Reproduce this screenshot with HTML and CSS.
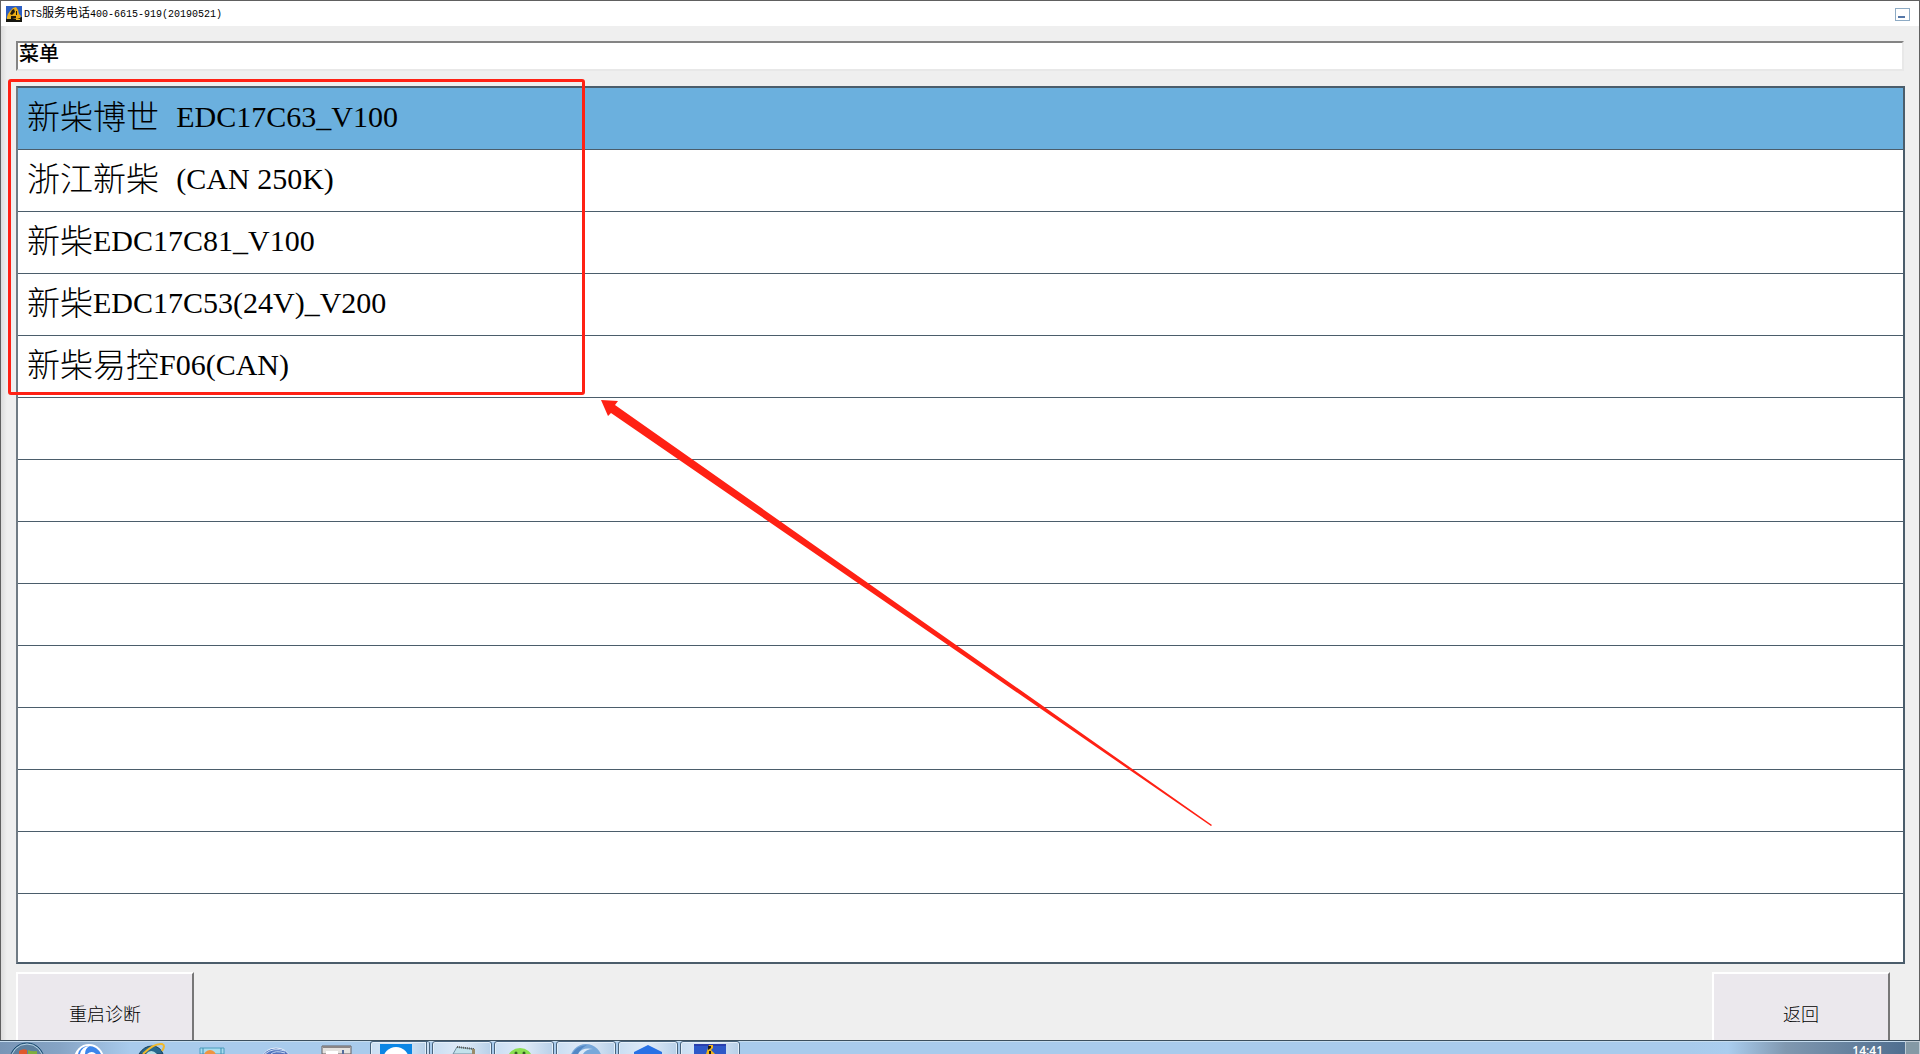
FILE: index.html
```
<!doctype html>
<html lang="zh-CN">

<head>
    <title>DTS</title>
    <meta charset="utf-8" />
    <meta name="viewport" content="width=device-width, initial-scale=1.0" />
    <link rel="stylesheet" href="styles.css">
</head>

<body>
    <div class="window">
        <header class="titlebar">
            <svg class="app-icon" viewBox="0 0 16 16">
                <rect width="16" height="16" fill="#2c5fc4" />
                <path d="M0 16v-3l2-1 5-1 4 1 5-1v5z" fill="#161610" />
                <path d="M2 8l2-3 3-3 3-1 2 3 1 4 2 2-1 2-3 1-5-1-5-1z" fill="#edae16" />
                <path d="M6 4l2-1 1 3-3 3-2-1zM10 5h1v4h-1zM5 10h5v2H5z" fill="#221c10" />
                <path d="M1 11h4v2H1zM10 13h4v1h-4z" fill="#e2b32c" />
            </svg>
            <h1 class="title">DTS<span class="title-cn">服务电话</span>400-6615-919(20190521)</h1>
            <button class="minimize" aria-label="最小化"></button>
        </header>

        <main class="content">
            <input class="path" type="text" value="菜单" aria-label="路径" readonly>

            <ul class="menu">
                <li class="row selected">新柴博世 <span class="code spaced">EDC17C63_V100</span></li>
                <li class="row">浙江新柴 <span class="code spaced">(CAN 250K)</span></li>
                <li class="row">新柴<span class="code">EDC17C81_V100</span></li>
                <li class="row">新柴<span class="code">EDC17C53(24V)_V200</span></li>
                <li class="row">新柴易控<span class="code">F06(CAN)</span></li>
                <li class="row"></li>
                <li class="row"></li>
                <li class="row"></li>
                <li class="row"></li>
                <li class="row"></li>
                <li class="row"></li>
                <li class="row"></li>
                <li class="row"></li>
                <li class="row"></li>
            </ul>

            <div class="actions">
                <button class="action">重启诊断</button>
                <button class="action">返回</button>
            </div>
        </main>
    </div>

    <footer class="taskbar">
        <div class="pinned">
            <!-- start orb -->
            <svg class="pin" viewBox="0 0 36 12">
                <circle cx="18" cy="18" r="17" fill="#5d7f9e" stroke="#174a70" />
                <circle cx="18" cy="18" r="16" fill="none" stroke="#b5d3e6" />
                <path d="M10 12V9q4-3 8-1v4z" fill="#e0582c" />
                <path d="M19 12V8q4 2 9 1v3z" fill="#7fae3d" />
            </svg>
            <!-- browser -->
            <svg class="pin" viewBox="0 0 36 12">
                <circle cx="18" cy="17" r="15" fill="#fff" />
                <path d="M7 12Q9 4 18 4q8 0 12 8h-5q-4-4-9 0z" fill="#3d86ea" />
                <path d="M14 12q0-6 5-8-8 0-10 8z" fill="#fff" />
            </svg>
            <!-- internet explorer -->
            <svg class="pin" viewBox="0 0 36 12">
                <path d="M6 12Q11 4 19 4q8 0 11 8z" fill="#26688d" stroke="#173f5c" />
                <path d="M13 12q5-6 11 0z" fill="#b4dde4" />
                <path d="M10 12Q21 1 29 2q4 1 0 7" fill="none" stroke="#f0b92c" stroke-width="2" />
            </svg>
            <!-- media player -->
            <svg class="pin" viewBox="0 0 36 12">
                <path d="M5 6h24v6H5z" fill="#a9dcee" stroke="#4a9cbd" />
                <path d="M26 6v6M8 6v6" stroke="#3b90b4" />
                <circle cx="15" cy="14" r="6" fill="#ee9440" />
            </svg>
            <svg class="pin" viewBox="0 0 36 12">
                <ellipse cx="19" cy="15" rx="13" ry="9" fill="#5274bd" stroke="#e7effa" />
                <path d="M8 12q8-7 20-3M14 12q4-4 14-1" fill="none" stroke="#c9dcf4" />
            </svg>
            <svg class="pin" viewBox="0 0 36 12">
                <path d="M3 4h29v8H3z" fill="#e5e2df" stroke="#655f60" />
                <path d="M4 5h27" stroke="#8a8586" stroke-width="2" />
                <path d="M7 9h12v3H7z" fill="#fff" />
                <path d="M23 8h2v4h-2z" fill="#536b9c" />
            </svg>
        </div>

        <div class="tasks">
            <button class="task stacked" aria-label="TeamViewer">
                <svg class="task-icon" viewBox="0 0 32 10">
                    <path d="M0 0h32v10H0z" fill="#0b86e5" />
                    <circle cx="16" cy="16" r="13" fill="#fff" />
                </svg>
            </button>
            <button class="task" aria-label="记事本">
                <svg class="task-icon" viewBox="0 0 32 10">
                    <path d="M11 3l17 2v5H7z" fill="#c3e2ec" stroke="#718ea0" />
                    <path d="M11 3l17 2" stroke="#5b5c58" stroke-width="2" stroke-dasharray="1 1" />
                    <path d="M26 5h3v5h-3z" fill="#9a8b69" />
                </svg>
            </button>
            <button class="task" aria-label="微信">
                <svg class="task-icon" viewBox="0 0 32 10">
                    <ellipse cx="12" cy="14" rx="12" ry="10" fill="#8ce052" />
                    <circle cx="8" cy="9" r="1.5" fill="#345f25" />
                    <circle cx="16" cy="9" r="1.5" fill="#345f25" />
                </svg>
            </button>
            <button class="task" aria-label="浏览器">
                <svg class="task-icon" viewBox="0 0 32 10">
                    <circle cx="16" cy="16" r="16" fill="#78a8da" />
                    <path d="M8 10q4-7 15-5-7 0-10 5z" fill="#dce9f7" />
                    <path d="M2 10Q6 2 17 1 10 5 8 10z" fill="#5388c5" />
                </svg>
            </button>
            <button class="task" aria-label="工具">
                <svg class="task-icon" viewBox="0 0 32 10">
                    <path d="M2 10V8L16 1l14 7v2z" fill="#2871e5" />
                </svg>
            </button>
            <button class="task" aria-label="DTS">
                <svg class="task-icon" viewBox="0 0 32 10">
                    <path d="M0 0h32v10H0z" fill="#2d58c8" />
                    <path d="M0 0h32v2H0z" fill="#293fae" />
                    <path d="M12 10l2-6 1-3h4v3l-2 2 4 4z" fill="#efb51a" />
                    <path d="M14 2h3v2l-3 2zM15 7h2v3h-2z" fill="#1c1a1c" />
                </svg>
            </button>
        </div>

        <div class="tray">
            <time class="clock">14:41</time>
            <button class="show-desktop" aria-label="显示桌面"></button>
        </div>
    </footer>

    <!-- red marks over the list -->
    <div class="highlight"></div>
    <svg class="arrow" viewBox="0 0 612 428">
        <path d="M0 0L17 1 14 5 611 425 610 426 10 13 7 16z" fill="#ff2114" />
    </svg>
</body>

</html>
```
FILE: styles.css
```
* {
    box-sizing: border-box;
}

body {
    display: flex;
    flex-direction: column;
    height: 100vh;
    margin: 0;
    overflow: hidden;
    position: relative;
    background-color: #efefef;
    color: #000;
    font-family: "Liberation Serif", "Noto Sans CJK SC", serif;
}

button {
    padding: 0;
    font-family: inherit;
}

.window {
    display: flex;
    flex: 1;
    flex-direction: column;
    min-height: 0;
    overflow: hidden;
    border: 1px solid #606060;
    border-bottom: none;
}

/* title bar */
.titlebar {
    display: flex;
    flex-shrink: 0;
    align-items: center;
    height: 25px;
    padding: 0 9px 0 5px;
    background-color: #fff;
}

.app-icon {
    width: 16px;
    height: 16px;
    margin-top: 1px;
}

.title {
    flex: 1;
    margin: 0 0 0 2px;
    padding-top: 2px;
    font-family: "Liberation Mono", "Noto Sans CJK SC", monospace;
    font-size: 10px;
    font-weight: normal;
    line-height: 24px;
}

.title-cn {
    font-size: 12px;
}

.minimize {
    display: flex;
    align-items: flex-end;
    width: 15px;
    height: 13px;
    margin-top: 2px;
    padding: 2px;
    border: 1px solid #8eabc4;
    background-color: #fff;
}

.minimize::before {
    content: "";
    width: 7px;
    height: 2px;
    background-color: #5577a8;
}

/* content */
.content {
    display: flex;
    flex: 1;
    flex-direction: column;
    min-height: 0;
    padding: 15px 14px 0 15px;
    background: linear-gradient(to right, #dcdcdc, #efefef 6px);
}

.path {
    flex-shrink: 0;
    height: 30px;
    margin-right: 1px;
    padding: 0 0 7px 1px;
    border: 2px solid;
    border-color: #848484 #e8e8e8 #e8e8e8 #848484;
    background-color: #fff;
    color: #000;
    font-family: "Noto Sans CJK SC", sans-serif;
    font-size: 20px;
    font-weight: 500;
    line-height: 20px;
}

.menu {
    display: flex;
    flex: 1 0 auto;
    flex-direction: column;
    margin: 15px 0 8px;
    padding: 0;
    border: 2px solid;
    border-color: #4b5d6b #4b5d6b #4b5d6b #707b84;
    background-color: #fff;
    list-style: none;
}

.row {
    height: 62px;
    padding-left: 9px;
    border-bottom: 1px solid #4b5d6b;
    font-family: "Noto Sans CJK SC", sans-serif;
    font-size: 33px;
    font-weight: 300;
    line-height: 54px;
    white-space: nowrap;
}

.row:last-child {
    height: 68px;
    border-bottom: none;
}

.selected {
    background-color: #6bb0de;
}

.code {
    font-family: "Liberation Serif", serif;
    font-size: 30px;
    font-weight: normal;
    line-height: 1;
    vertical-align: 2px;
}

.spaced {
    margin-left: 10px;
}

.actions {
    display: flex;
    flex-shrink: 0;
    justify-content: space-between;
    padding-right: 15px;
}

.action {
    width: 178px;
    height: 82px;
    border: 2px solid;
    border-color: #fff #777 #777 #fff;
    background-color: #ebe8ed;
    color: #000;
    font-family: "Noto Sans CJK SC", sans-serif;
    font-size: 18px;
    font-weight: 300;
}

/* taskbar */
.taskbar {
    display: flex;
    flex-shrink: 0;
    height: 14px;
    overflow: hidden;
    border-top: 1px solid #3c4f5e;
    box-shadow: inset 0 1px #c5dcef;
    background: linear-gradient(to right, #7895b6, #86a4c5 60px, #a9cbec 130px, #a9cbec 88%, #aacdee 90%, #8098b0 93%, #49698b);
}

.pinned {
    display: flex;
    gap: 26px;
    padding: 1px 15px 0 9px;
}

.pin {
    width: 36px;
    height: 12px;
}

.tasks {
    display: flex;
    gap: 2px;
}

.task {
    display: flex;
    justify-content: center;
    width: 60px;
    height: 24px;
    padding-top: 2px;
    border: 1px solid #48637d;
    border-radius: 3px;
    box-shadow: inset 0 0 0 1px #e4eff9;
    background: linear-gradient(to right, #cadef2, #e0ebf8 50%, #b8d0e8);
}

.stacked {
    padding-right: 6px;
    border-right: 4px double #48637d;
}

.task-icon {
    width: 32px;
    height: 10px;
}

.tray {
    display: flex;
    gap: 22px;
    margin-left: auto;
}

.clock {
    margin-top: 2px;
    color: #fff;
    font-family: "Open Sans", sans-serif;
    font-size: 12px;
    font-weight: 600;
    line-height: 16px;
}

.show-desktop {
    width: 15px;
    height: 24px;
    border: 1px solid #c0ccd5;
    background-color: #8499a5;
}

/* marks */
.highlight {
    position: absolute;
    top: 79px;
    left: 8px;
    width: 577px;
    height: 316px;
    border: 3px solid #ff2114;
    border-radius: 3px;
}

.arrow {
    position: absolute;
    top: 400px;
    left: 601px;
    width: 612px;
    height: 428px;
}
```
